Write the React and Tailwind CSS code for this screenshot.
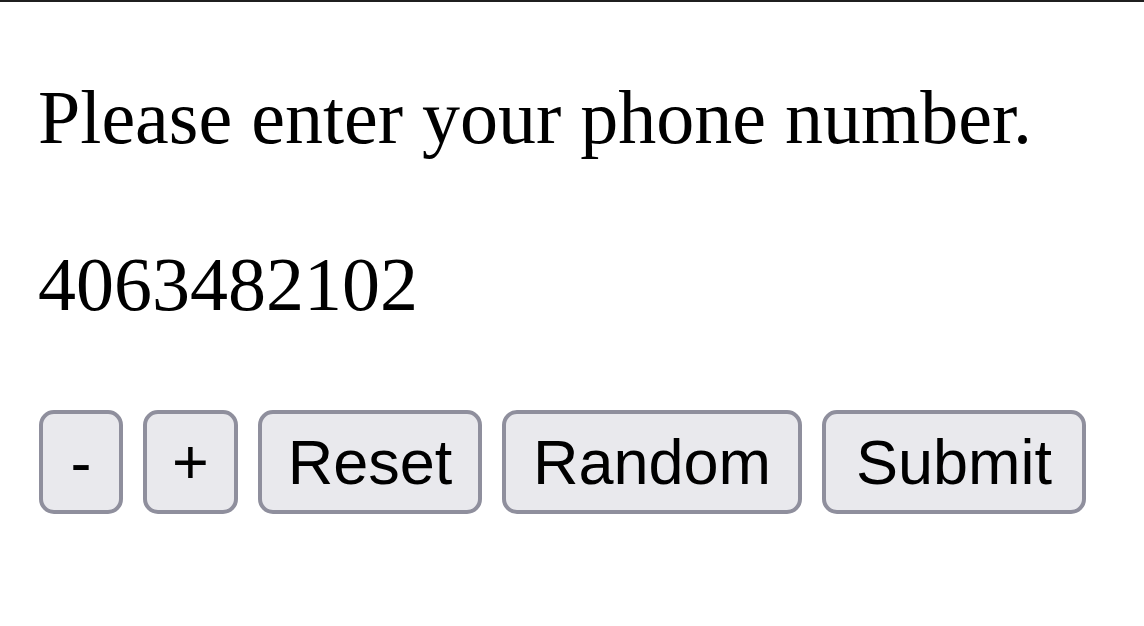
export default function App() {
  const buttons = [
    { label: '-', w: 'w-[84px]' },
    { label: '+', w: 'w-[95px]' },
    { label: 'Reset', w: 'w-[224px]' },
    { label: 'Random', w: 'w-[300px]' },
    { label: 'Submit', w: 'w-[264px]' },
  ]

  return (
    <div className="min-h-[626px] bg-white text-black">
      <div className="h-[2px] bg-[#1f1f1f]" />
      <div className="px-[38px]" style={{ fontFamily: '"Liberation Serif", "Times New Roman", serif' }}>
        <p className="mt-[72px] text-[76px] leading-[87px]">Please enter your phone number.</p>
        <p className="mt-[80px] text-[76px] leading-[87px]">4063482102</p>
        <div className="mt-[82px] flex gap-[20px] pl-[1px]">
          {buttons.map((b) => (
            <button
              key={b.label}
              className={`${b.w} h-[104px] flex items-center justify-center rounded-[15px] border-4 border-[#8f8f9d] bg-[#e9e9ed] text-[63px] leading-none text-black`}
              style={{ fontFamily: '"Liberation Sans", Arial, sans-serif' }}
            >
              {b.label}
            </button>
          ))}
        </div>
      </div>
    </div>
  )
}
